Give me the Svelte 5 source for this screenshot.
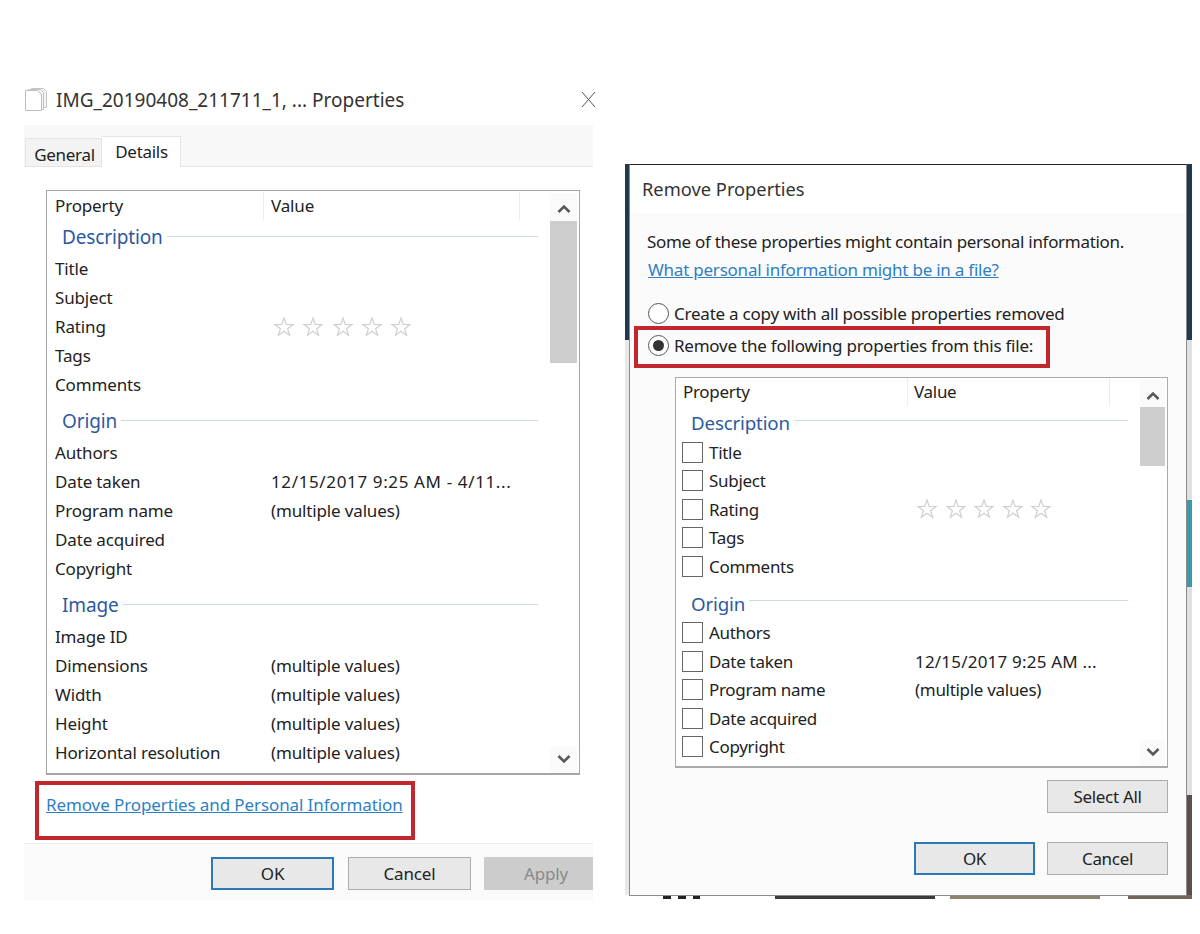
<script>
  const groups = [
    {
      name: "Description",
      rows: [["Title"], ["Subject"], ["Rating", "stars"], ["Tags"], ["Comments"]],
    },
    {
      name: "Origin",
      rows: [
        ["Authors"],
        ["Date taken", "12/15/2017 9:25 AM - 4/11..."],
        ["Program name", "(multiple values)"],
        ["Date acquired"],
        ["Copyright"],
      ],
    },
    {
      name: "Image",
      rows: [
        ["Image ID"],
        ["Dimensions", "(multiple values)"],
        ["Width", "(multiple values)"],
        ["Height", "(multiple values)"],
        ["Horizontal resolution", "(multiple values)"],
      ],
    },
  ];

  const removeGroups = [
    {
      name: "Description",
      rows: [["Title"], ["Subject"], ["Rating", "stars"], ["Tags"], ["Comments"]],
    },
    {
      name: "Origin",
      rows: [
        ["Authors"],
        ["Date taken", "12/15/2017 9:25 AM ..."],
        ["Program name", "(multiple values)"],
        ["Date acquired"],
        ["Copyright"],
      ],
    },
  ];
</script>

{#snippet stars()}
  <span class="stars">
    {#each [0, 1, 2, 3, 4] as i (i)}
      <svg width="22" height="22" viewBox="0 0 22 22">
        <path d="M11 2l2.230 6.430 6.800.130-5.420 4.110 1.970 6.520L11 15.300l-5.580 3.890 1.970-6.520-5.420-4.110 6.800-.130z" fill="none" stroke="#cfcfcf" stroke-width="1.200" />
      </svg>
    {/each}
  </span>
{/snippet}

{#snippet chevron(up)}
  <svg class="chev" width="16" height="10" viewBox="0 0 16 10">
    <path d={up ? "M2.500 8l5.500-5.500 5.500 5.500" : "M2.500 2l5.500 5.500 5.500-5.500"} fill="none" stroke="#585858" stroke-width="2.600" />
  </svg>
{/snippet}

<div class="page">
  <section class="props">
    <header class="props-title">
      <svg width="26" height="26" viewBox="0 0 26 26">
        <path d="M7.500 1.500h12l3 3v16h-15z" fill="#f4f4f4" stroke="#c4c4c4" />
        <path d="M4.500 2.500h12l3 3v17h-15z" fill="#f4f4f4" stroke="#c4c4c4" />
        <path d="M1.500 3.500h12l4 4v16h-16z" fill="#fff" stroke="#bdbdbd" />
      </svg>
      <span class="title-text">IMG_20190408_211711_1, ... Properties</span>
      <svg class="close" width="15" height="17" viewBox="0 0 15 17">
        <path d="M1 1l13 15M14 1L1 16" stroke="#555" stroke-width="1" fill="none" />
      </svg>
    </header>

    <div class="tabs">
      <span class="tab">General</span>
      <span class="tab active">Details</span>
    </div>

    <div class="props-body">
      <div class="list">
        <div class="list-main">
          <div class="list-head">
            <span class="head-prop">Property</span>
            <span class="head-val">Value</span>
          </div>
          {#each groups as group (group.name)}
            <div class="group">
              <div class="group-name"><span>{group.name}</span><i></i></div>
              {#each group.rows as row (row[0])}
                <div class="row">
                  <span class="cell-prop">{row[0]}</span>
                  {#if row[1] === "stars"}
                    {@render stars()}
                  {:else if row[1]}
                    <span class="cell-val" class:date={row[1].startsWith("12")}>{row[1]}</span>
                  {/if}
                </div>
              {/each}
            </div>
          {/each}
        </div>
        <div class="scroll">
          {@render chevron(true)}
          <div class="thumb"></div>
          <div class="track"></div>
          {@render chevron(false)}
        </div>
      </div>
      <a class="link" href="#remove">Remove Properties and Personal Information</a>
    </div>

    <footer class="props-foot">
      <button class="btn default">OK</button>
      <button class="btn">Cancel</button>
      <button class="btn disabled">Apply</button>
    </footer>
    <div class="mark mark-link"></div>
  </section>

  <section class="backdrop">
    <div class="edge edge-left"></div>
    <div class="edge edge-right"></div>
    <div class="photo-strip">
      <span class="gap-a"></span>
      <span class="stripes"></span>
      <span class="gap-b"></span>
      <span class="dark"></span>
      <span class="gap-c"></span>
      <span class="brown"></span>
      <span class="gap-d"></span>
      <span class="brown last"></span>
    </div>
    <div class="remove">
      <header class="remove-title">Remove Properties</header>
      <div class="remove-body">
        <p class="intro">Some of these properties might contain personal information.</p>
        <a class="link small" href="#info">What personal information might be in a file?</a>
        <label class="radio first"><i class="dot"></i>Create a copy with all possible properties removed</label>
        <label class="radio"><i class="dot on"></i>Remove the following properties from this file:</label>

        <div class="list short">
          <div class="list-main">
            <div class="list-head">
              <span class="head-prop">Property</span>
              <span class="head-val">Value</span>
            </div>
            {#each removeGroups as group (group.name)}
              <div class="group">
                <div class="group-name"><span>{group.name}</span><i></i></div>
                {#each group.rows as row (row[0])}
                  <div class="row">
                    <i class="check"></i>
                    <span class="cell-prop">{row[0]}</span>
                    {#if row[1] === "stars"}
                      {@render stars()}
                    {:else if row[1]}
                      <span class="cell-val" class:date={row[1].startsWith("12")}>{row[1]}</span>
                    {/if}
                  </div>
                {/each}
              </div>
            {/each}
          </div>
          <div class="scroll">
            {@render chevron(true)}
            <div class="thumb"></div>
            <div class="track"></div>
            {@render chevron(false)}
          </div>
        </div>

        <div class="select-row"><button class="btn">Select All</button></div>
        <div class="action-row">
          <button class="btn default">OK</button>
          <button class="btn">Cancel</button>
        </div>
      </div>
      <div class="mark mark-radio"></div>
    </div>
  </section>
</div>

<style>
  :global(body) {
    margin: 0;
    background: #fff;
  }
  .page {
    position: relative;
    width: 1200px;
    height: 934px;
    overflow: hidden;
    background: #fff;
    font-family: "Noto Sans", "Liberation Sans", sans-serif;
    font-size: 17px;
    letter-spacing: -0.15px;
    color: #222;
  }
  /* the two dialogs sit on a free canvas, like windows on a desktop */
  .props {
    position: absolute;
    left: 24px;
    top: 80px;
    width: 569px;
    height: 820px;
    display: flex;
    flex-direction: column;
  }
  .props-title {
    height: 45px;
    box-sizing: border-box;
    display: flex;
    align-items: center;
    gap: 6px;
    padding-bottom: 6px;
  }
  .title-text {
    font-size: 19px;
    letter-spacing: 0;
    color: #333;
  }
  .close {
    position: absolute;
    left: 557px;
    top: 11px;
  }
  .tabs {
    height: 42px;
    box-sizing: border-box;
    display: flex;
    align-items: flex-end;
    background: #f8f8f8;
    border-bottom: 1px solid #e4e4e4;
    padding-left: 1px;
  }
  .tab {
    height: 28px;
    width: 77px;
    box-sizing: border-box;
    display: flex;
    align-items: center;
    justify-content: center;
    background: #f3f3f3;
    border: 1px solid #e4e4e4;
    border-bottom: 0;
    padding: 4px 0 0 2px;
    letter-spacing: -0.3px;
  }
  .tab.active {
    height: 31px;
    width: 79px;
    background: #fff;
    padding: 0 0 1px 1px;
    margin-bottom: -1px;
    border-left: 0;
  }
  .props-body {
    height: 676px;
    box-sizing: border-box;
    padding: 23px 13px 0 22px;
  }
  .list {
    height: 585px;
    box-sizing: border-box;
    display: flex;
    border: 1px solid #a6a6a6;
    border-bottom-width: 2px;
    background: #fff;
    overflow: hidden;
  }
  .list.short {
    height: 391px;
    flex: none;
    margin: 16px 0 0 28px;
    border-color: #aaa;
  }
  .list-main {
    flex: 1;
    min-width: 0;
    padding: 0 12px 0 8px;
  }
  .list-head {
    height: 31px;
    box-sizing: border-box;
    display: flex;
    align-items: center;
    padding-bottom: 2px;
  }
  .head-prop {
    width: 208px;
    height: 28px;
    line-height: 28px;
    border-right: 1px solid #ededed;
  }
  .head-val {
    width: 256px;
    height: 28px;
    line-height: 28px;
    padding-left: 7px;
    border-right: 1px solid #ededed;
    box-sizing: border-box;
  }
  .group {
    margin-bottom: 7px;
  }
  .group-name {
    height: 32px;
    box-sizing: border-box;
    display: flex;
    align-items: center;
    gap: 4px;
    padding: 0 0 2px 7px;
    font-size: 19px;
    color: #2d5a9e;
  }
  .group-name i {
    flex: 1;
    height: 1px;
    margin-top: -2px;
    background: #cddbe6;
  }
  .row {
    height: 29px;
    display: flex;
    align-items: center;
  }
  .cell-prop {
    width: 216px;
    flex: none;
  }
  .cell-val {
    white-space: nowrap;
  }
  .cell-val.date {
    letter-spacing: 0.63px;
  }
  .stars {
    display: flex;
    gap: 7.250px;
    margin-left: 2px;
  }
  .stars svg {
    display: block;
  }
  .scroll {
    width: 27px;
    margin: 2px 2px 0 0;
    display: flex;
    flex-direction: column;
    align-items: center;
    background: #fafafa;
  }
  .chev {
    flex: none;
    margin: 11px 0 7px;
  }
  .chev:last-child {
    margin: 7px 0 9px;
  }
  .thumb {
    flex: none;
    width: 100%;
    height: 142px;
    background: #cdcdcd;
  }
  .track {
    flex: 1;
    width: 100%;
    background: #fff;
  }
  .link {
    display: block;
    margin-top: 18px;
    letter-spacing: -0.1px;
    color: #2f7fc4;
    text-decoration: underline;
  }
  .props-foot {
    flex: 1;
    box-sizing: border-box;
    display: flex;
    justify-content: flex-end;
    align-items: flex-start;
    gap: 13px;
    padding-top: 13px;
    background: #fafafa;
    border-top: 1px solid #ececec;
  }
  .btn {
    height: 33px;
    width: 123px;
    box-sizing: border-box;
    border: 1px solid #adadad;
    background: #e8e8e8;
    font: inherit;
    letter-spacing: inherit;
    color: #222;
    padding: 0;
  }
  .btn.default {
    border: 2px solid #2a7ab8;
  }
  .props-foot .btn.default {
    margin-right: 1px;
  }
  .btn.disabled {
    width: 109px;
    background: #cccccc;
    border-color: #cccccc;
    border-right: 0;
    padding-left: 14px;
    color: #8a8a8a;
  }
  .mark {
    position: absolute;
    box-sizing: border-box;
    border: 4px solid #c1272d;
    pointer-events: none;
  }
  .mark-link {
    left: 11px;
    top: 701px;
    width: 380px;
    height: 59px;
  }
  .backdrop {
    position: absolute;
    left: 625px;
    top: 164px;
    width: 567px;
    height: 736px;
  }
  .edge {
    position: absolute;
    top: 0;
    height: 731px;
  }
  .edge-left {
    left: 0;
    width: 5px;
    background: linear-gradient(#1f3a4f 0 176px, #e9e9e9 176px);
  }
  .edge-right {
    right: 0;
    width: 6px;
    background: linear-gradient(#1f3a4f 0 176px, #e0e0e0 176px 336px, #3a9aa8 336px 423px, #e0e0e0 423px 631px, #5d4e48 631px);
  }
  .photo-strip {
    position: absolute;
    left: 0;
    right: 0;
    top: 731px;
    height: 4px;
    display: flex;
  }
  .gap-a {
    width: 38px;
  }
  .stripes {
    width: 37px;
    background: repeating-linear-gradient(90deg, #222 0 8px, transparent 8px 15px);
  }
  .gap-b {
    width: 75px;
  }
  .dark {
    width: 160px;
    background: #3a3a3a;
  }
  .gap-c {
    width: 15px;
  }
  .brown {
    width: 150px;
    background: #8c8472;
  }
  .gap-d {
    width: 28px;
  }
  .brown.last {
    width: 64px;
    background: #6f675e;
  }
  .remove {
    position: absolute;
    left: 4px;
    top: 0;
    width: 558px;
    height: 732px;
    box-sizing: border-box;
    display: flex;
    flex-direction: column;
    border: 1px solid #8a8a8a;
    border-top-color: #222;
    background: #fbfbfb;
  }
  .remove-title {
    height: 48px;
    box-sizing: border-box;
    flex: none;
    background: #fff;
    display: flex;
    align-items: center;
    padding: 0 0 2px 12px;
    font-size: 18.300px;
    letter-spacing: 0;
    color: #333;
  }
  .remove-body {
    flex: 1;
    display: flex;
    flex-direction: column;
    padding: 15px 18px 0 17px;
    letter-spacing: -0.3px;
  }
  .intro {
    margin: 0;
    line-height: 28px;
  }
  .link.small {
    margin: 0 0 0 1px;
    line-height: 28px;
    letter-spacing: -0.23px;
  }
  .radio {
    display: flex;
    align-items: center;
    height: 32px;
    gap: 5px;
    padding-left: 1px;
    letter-spacing: -0.23px;
  }
  .radio.first {
    margin-top: 13px;
  }
  .dot {
    width: 21px;
    height: 21px;
    box-sizing: border-box;
    border: 1px solid #555;
    border-radius: 50%;
    background: #fff;
    display: flex;
    align-items: center;
    justify-content: center;
  }
  .dot.on::before {
    content: "";
    width: 11px;
    height: 11px;
    border-radius: 50%;
    background: #333;
  }
  .check {
    flex: none;
    width: 21px;
    height: 21px;
    box-sizing: border-box;
    border: 1px solid #666;
    margin: 0 6px 0 -1px;
    background: #fff;
  }
  .short .list-main {
    padding-left: 7px;
  }
  .short .list-head {
    height: 29px;
    padding-bottom: 1px;
  }
  .short .group-name {
    height: 31px;
    padding: 0 0 0 8px;
    font-size: 18.700px;
    letter-spacing: -0.15px;
  }
  .short .group-name i {
    margin-top: -5px;
  }
  .short .row {
    height: 28.500px;
  }
  .short .cell-prop {
    width: 206px;
  }
  .short .cell-val.date {
    letter-spacing: 0.2px;
  }
  .short .group {
    margin-bottom: 7px;
  }
  .short .stars {
    margin-left: 1px;
    gap: 6.500px;
  }
  .short .head-prop {
    width: 224px;
  }
  .short .head-val {
    width: 202px;
    padding-left: 6px;
  }
  .short .scroll {
    width: 25px;
  }
  .short .chev:first-child {
    margin-bottom: 6px;
  }
  .short .thumb {
    height: 59px;
  }
  .select-row,
  .action-row {
    display: flex;
    justify-content: flex-end;
    gap: 12px;
  }
  .select-row {
    margin-top: 12px;
  }
  .action-row {
    margin-top: 29px;
  }
  .select-row .btn,
  .action-row .btn {
    width: 121px;
  }
  .mark-radio {
    left: 4px;
    top: 161px;
    width: 416px;
    height: 42px;
  }
</style>
